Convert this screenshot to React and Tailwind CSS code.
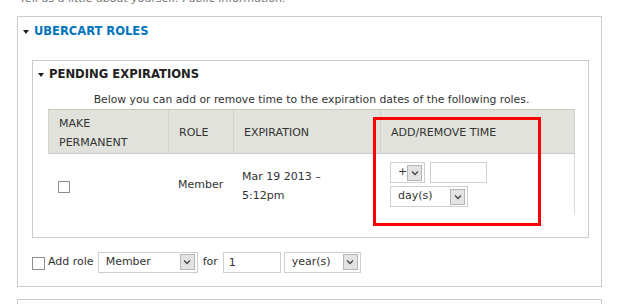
import React from "react";

function Chevron() {
  return (
    <svg width="8" height="6" viewBox="0 0 8 6" className="block">
      <path d="M1 1.5 L4 4.5 L7 1.5" fill="none" stroke="#444" strokeWidth="1.3" />
    </svg>
  );
}

function Select({ value, width }) {
  return (
    <div
      className={`flex items-center justify-between h-[21px] border border-[#cfcfcf] bg-white pl-[7px] pr-[2px] ${width}`}
    >
      <span className="text-[11px] text-[#333]">{value}</span>
      <span className="flex items-center justify-center w-[15px] h-[16px] bg-[#e3e3e3] border border-[#b5b5b5]">
        <Chevron />
      </span>
    </div>
  );
}

function Checkbox() {
  return <span className="block w-[12px] h-[12px] border border-[#8f8f8f] bg-white" />;
}

function Triangle() {
  return (
    <span className="block w-0 h-0 border-l-[3px] border-r-[3px] border-t-[4px] border-l-transparent border-r-transparent border-t-[#222]" />
  );
}

export default function App() {
  return (
    <div
      className="w-[620px] h-[304px] overflow-hidden bg-white relative text-[#333]"
      style={{ fontFamily: "'DejaVu Sans', Verdana, sans-serif" }}
    >
      {/* intro text, cut off at the top */}
      <div className="h-[16px] overflow-hidden pl-[20px]">
        <p className="-mt-[8px] text-[11px] leading-[14px] italic text-[#777]">
          Tell us a little about yourself. Public information.
        </p>
      </div>

      {/* Ubercart roles fieldset */}
      <div className="ml-[17px] w-[585px] h-[271px] border border-[#cccccc]">
        <div className="h-[30px] flex items-center gap-[5px] pl-[5px]">
          <Triangle />
          <span className="text-[11.5px] font-bold text-[#0074bd]">UBERCART ROLES</span>
        </div>

        {/* Pending expirations fieldset */}
        <div className="ml-[14px] mt-[13px] w-[557px] h-[178px] border border-[#cccccc]">
          <div className="h-[28px] flex items-center gap-[5px] pl-[5px]">
            <Triangle />
            <span className="text-[11.6px] font-bold text-[#222]">PENDING EXPIRATIONS</span>
          </div>

          <div className="ml-[15px] w-[527px]">
            <div className="h-[20px] pt-[3px] text-center text-[10.8px] leading-[16px]">
              Below you can add or remove time to the expiration dates of the following roles.
            </div>

            <div className="grid grid-cols-[120px_65px_147px_195px] h-[45px] bg-[#e1e2dc] border-t border-b border-[#c9cac4] text-[11px] leading-[19px] text-[#333]">
              <div className="flex items-center pl-[10px] pt-[2px] border-l border-[#d0d1cb]">
                MAKE
                <br />
                PERMANENT
              </div>
              <div className="flex items-center pl-[10px] pt-[2px] border-l border-[#d0d1cb]">ROLE</div>
              <div className="flex items-center pl-[10px] pt-[2px] border-l border-[#d0d1cb]">EXPIRATION</div>
              <div className="flex items-center pl-[10px] pt-[2px] border-l border-r border-[#d0d1cb]">
                ADD/REMOVE TIME
              </div>
            </div>

            <div className="grid grid-cols-[120px_65px_147px_195px] h-[61px] text-[11px] border-r border-[#dcdcdc]">
              <div className="flex items-center pl-[10px] pt-[4px]">
                <Checkbox />
              </div>
              <div className="flex items-center pl-[10px] pt-[2px]">Member</div>
              <div className="flex items-center pl-[9px] leading-[19px] pt-[2px]">
                <span>
                  Mar 19 2013 –
                  <br />
                  5:12pm
                </span>
              </div>
              <div className="pl-[10px] pt-[8px] flex flex-col gap-[3px]">
                <div className="flex gap-[5px]">
                  <Select value="+" width="w-[35px]" />
                  <div className="w-[57px] h-[21px] border border-[#cfcfcf] bg-white" />
                </div>
                <Select value="day(s)" width="w-[78px]" />
              </div>
            </div>
          </div>
        </div>

        {/* add role row */}
        <div className="mt-[13px] ml-[14px] flex items-center h-[22px] text-[11px]">
          <span className="block w-[13px] h-[13px] border border-[#8f8f8f] bg-white mt-[2px]" />
          <span className="ml-[3px] mr-[4px]">Add role</span>
          <Select value="Member" width="w-[100px]" />
          <span className="ml-[5px] mr-[5px]">for</span>
          <div className="w-[58px] h-[21px] border border-[#cfcfcf] bg-white pl-[5px] leading-[19px]">1</div>
          <div className="ml-[3px]">
            <Select value="year(s)" width="w-[77px]" />
          </div>
        </div>
      </div>

      {/* next fieldset, cut off */}
      <div className="ml-[17px] mt-[12px] w-[585px] h-[20px] border border-[#cccccc]" />

      {/* red annotation box */}
      <div className="absolute left-[373px] top-[117px] w-[168px] h-[109px] border-[3px] border-[#ff0000]" />
    </div>
  );
}
